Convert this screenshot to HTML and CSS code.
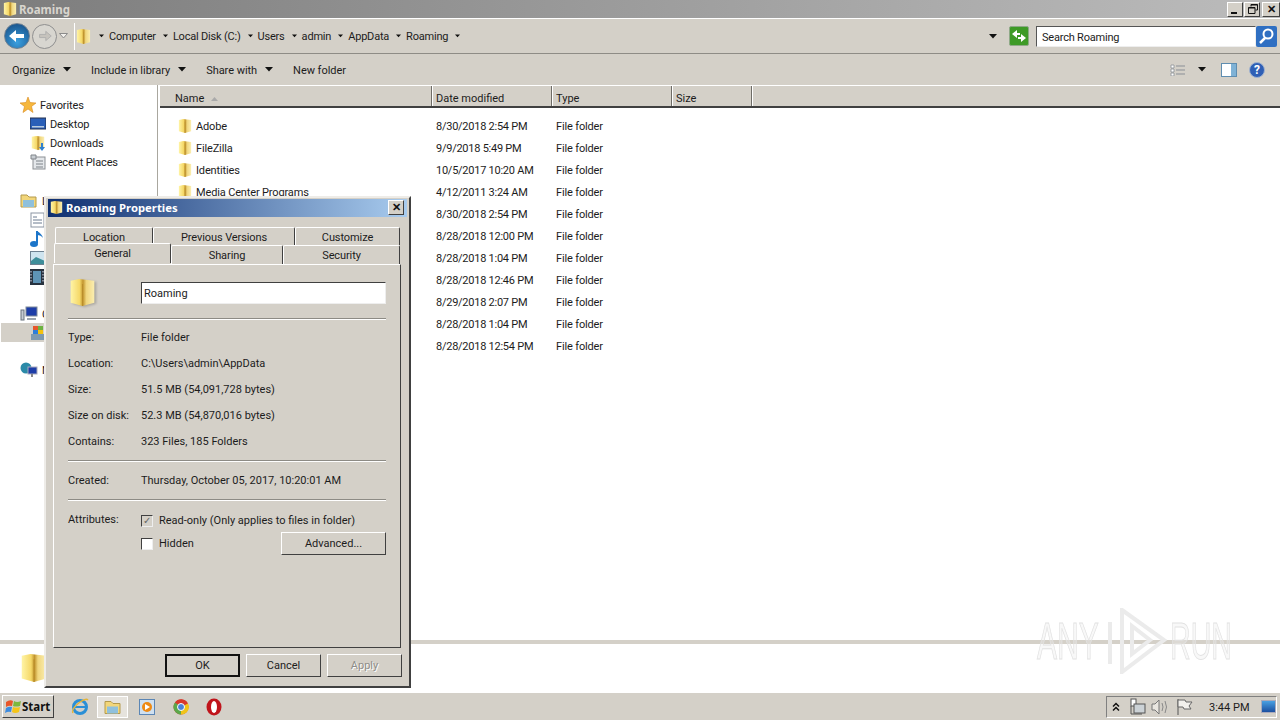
FILE: index.html
```html
<!doctype html>
<html>
<head>
<meta charset="utf-8">
<title>Roaming</title>
<link rel="stylesheet" href="styles.css">
</head>

<body>
<svg class="defs" width="0" height="0">
	<defs>
		<linearGradient id="fold" x1="0" y1="0" x2="1" y2="0">
			<stop offset="0" stop-color="#fff4a6"/>
			<stop offset=".38" stop-color="#f5d868"/>
			<stop offset=".52" stop-color="#c2952f"/>
			<stop offset=".66" stop-color="#f0d67e"/>
			<stop offset="1" stop-color="#fbeeb0"/>
		</linearGradient>
		<symbol id="folder" viewBox="0 0 16 18">
			<path d="M1 2 L6 1 L15 2 V15 L8 17 L1 15Z" fill="url(#fold)"/>
			<path d="M8 4 V17" stroke="#b98d2b" stroke-width=".6"/>
		</symbol>
		<symbol id="arrow" viewBox="0 0 8 5">
			<path d="M0 0H8L4 4.5Z" fill="#111"/>
		</symbol>
	</defs>
</svg>

<div class="window">
	<div class="titlebar">
		<svg class="title-icon"><use href="#folder"/></svg>
		<span class="title-text">Roaming</span>
		<div class="caption-btns">
			<div class="cap-btn"><span class="cap-min"></span></div>
			<div class="cap-btn">
				<svg class="cap-restore" width="10" height="10" viewBox="0 0 10 10"><path d="M3 2.500V.5H9.500V6H7.500M.5 3.500H7V9.500H.5Z M3 1H9.500 M.5 4H7" fill="none" stroke="#111"/></svg>
			</div>
			<div class="cap-btn cap-x">✕</div>
		</div>
	</div>

	<div class="addressbar">
		<div class="nav">
			<div class="nav-back">
				<svg width="18" height="14" viewBox="0 0 18 14"><path d="M1 7 L8 1 V5 H16 V9 H8 V13Z" fill="#fff"/></svg>
			</div>
			<div class="nav-fwd">
				<svg width="14" height="12" viewBox="0 0 18 14"><path d="M17 7 L10 1 V5 H2 V9 H10 V13Z" fill="#c6c3bd" stroke="#aaa"/></svg>
			</div>
			<svg class="nav-drop" width="9" height="6" viewBox="0 0 9 6"><path d="M.5 .5H8.5L4.5 5Z" fill="#f2f0ec" stroke="#8b8b8b"/></svg>
		</div>
		<div class="crumbs">
			<svg class="crumb-icon"><use href="#folder"/></svg>
			<svg class="crumb-arrow"><use href="#arrow"/></svg><span class="crumb">Computer</span>
			<svg class="crumb-arrow"><use href="#arrow"/></svg><span class="crumb">Local Disk (C:)</span>
			<svg class="crumb-arrow"><use href="#arrow"/></svg><span class="crumb">Users</span>
			<svg class="crumb-arrow"><use href="#arrow"/></svg><span class="crumb">admin</span>
			<svg class="crumb-arrow"><use href="#arrow"/></svg><span class="crumb">AppData</span>
			<svg class="crumb-arrow"><use href="#arrow"/></svg><span class="crumb">Roaming</span>
			<svg class="crumb-arrow"><use href="#arrow"/></svg>
			<svg class="crumb-end"><use href="#arrow"/></svg>
		</div>
		<div class="refresh">
			<svg width="16" height="14" viewBox="0 0 16 14"><path d="M1 5 L6 1 V4 H9 V6 H6 V9Z M15 9 L10 5 V8 H7 V10 H10 V13Z" fill="#fff"/></svg>
		</div>
		<div class="search">Search Roaming</div>
		<div class="search-btn">
			<svg width="18" height="18" viewBox="0 0 18 18"><circle cx="10" cy="7" r="4.5" fill="none" stroke="#fff" stroke-width="2"/><path d="M7 11 L2 16" stroke="#fff" stroke-width="2.5"/></svg>
		</div>
	</div>

	<div class="toolbar">
		<span class="tool">Organize</span><svg class="tool-arrow"><use href="#arrow"/></svg>
		<span class="tool">Include in library</span><svg class="tool-arrow"><use href="#arrow"/></svg>
		<span class="tool">Share with</span><svg class="tool-arrow"><use href="#arrow"/></svg>
		<span class="tool">New folder</span>
		<div class="tool-right">
			<svg width="16" height="12" viewBox="0 0 16 12"><path d="M1 1H4V4H1Z M1 5H4V8H1Z M1 9H4V12H1Z" fill="#fff" stroke="#8a8f96" stroke-width=".8"/><path d="M6 2H15M6 6H15M6 10H15" stroke="#8a8f96"/></svg>
			<svg class="view-arrow"><use href="#arrow"/></svg>
			<svg class="pane-icon" width="16" height="14" viewBox="0 0 16 14"><rect x=".5" y=".5" width="15" height="13" fill="#fff" stroke="#5f8db0"/><rect x="10" y="1" width="5" height="12" fill="#7fb2d6"/></svg>
			<svg class="help-icon" width="16" height="16" viewBox="0 0 16 16"><circle cx="8" cy="8" r="7.5" fill="#2f5fb5" stroke="#9fb2d0"/><text x="8" y="12" text-anchor="middle" class="help-q">?</text></svg>
		</div>
	</div>

	<div class="main">
		<div class="sidebar">
			<div class="nav-group">
				<div class="nav-head">
					<svg width="16" height="16" viewBox="0 0 16 16"><path d="M8 0 L10 5.5 L16 6 L11.5 9.5 L13 15.5 L8 12 L3 15.5 L4.500 9.500 L0 6 L6 5.500Z" fill="#f6b73c" stroke="#d98a1e" stroke-width=".6"/></svg>
					<span>Favorites</span>
				</div>
				<div class="nav-item">
					<svg width="16" height="14" viewBox="0 0 16 14"><rect width="16" height="11" y="1" fill="#2a5fb8" stroke="#23304f"/><rect x="2" y="9" width="12" height="1.500" fill="#bcd"/></svg>
					<span>Desktop</span>
				</div>
				<div class="nav-item">
					<svg width="16" height="16" viewBox="0 0 16 16"><use href="#folder"/><path d="M11 8V12H9L12 16L15 12H13V8Z" fill="#2f7fd0"/></svg>
					<span>Downloads</span>
				</div>
				<div class="nav-item">
					<svg width="16" height="16" viewBox="0 0 16 16"><rect x="3" y="3" width="12" height="12" fill="#e4e7ea" stroke="#8b8f94"/><path d="M1 1H6V5H1Z" fill="#c9ced3" stroke="#80858a"/><path d="M6 7H13M6 10H13M6 13H13" stroke="#7c8288"/></svg>
					<span>Recent Places</span>
				</div>
			</div>
			<div class="nav-group lib-group">
				<div class="nav-head">
					<svg width="18" height="15" viewBox="0 0 18 15"><path d="M1 2H7L9 4H16V14H1Z" fill="#f2d67a" stroke="#b49a4c"/><rect x="3" y="7" width="11" height="7" fill="#8fc0dc"/></svg>
					<span>L</span>
				</div>
				<div class="nav-item">
					<svg width="15" height="16" viewBox="0 0 15 16"><rect x="1" y="1" width="13" height="14" fill="#fff" stroke="#8b95a3"/><path d="M3 5H7M3 8H12M3 11H12" stroke="#6a7b90"/></svg>
				</div>
				<div class="nav-item">
					<svg width="14" height="18" viewBox="0 0 14 18"><path d="M7 1V13" stroke="#1c75c9" stroke-width="2"/><ellipse cx="4" cy="14" rx="4" ry="3" fill="#1c75c9"/><path d="M7 1 Q12 4 13 8 Q11 5 7 5Z" fill="#1c75c9"/></svg>
				</div>
				<div class="nav-item">
					<svg width="16" height="14" viewBox="0 0 16 14"><rect x=".5" y=".5" width="15" height="13" fill="#cfe4ef" stroke="#6e8191"/><path d="M1 10 L6 6 L15 10V13H1Z" fill="#3e8e9a"/></svg>
				</div>
				<div class="nav-item">
					<svg width="14" height="16" viewBox="0 0 14 16"><rect width="14" height="16" fill="#27323f"/><rect x="3" y="2" width="8" height="12" fill="#5e93b5"/><path d="M1 2V14M13 2V14" stroke="#dde" stroke-dasharray="1.500 1.500"/></svg>
				</div>
			</div>
			<div class="nav-group comp-group">
				<div class="nav-head">
					<svg width="18" height="15" viewBox="0 0 18 15"><rect x="6" y="1" width="11" height="9" fill="#1d3da8" stroke="#7f8a99"/><rect x="1" y="4" width="3" height="10" fill="#c5cbd3" stroke="#69727d"/><rect x="7" y="12" width="9" height="2" fill="#9aa4b0"/></svg>
					<span>C</span>
				</div>
				<div class="nav-item selected">
					<svg width="16" height="16" viewBox="0 0 16 16"><rect x="1" y="9" width="14" height="6" fill="#7e9aaf"/><rect x="3" y="1" width="5" height="4" fill="#e6572c"/><rect x="8" y="1" width="5" height="4" fill="#6cb33f"/><rect x="3" y="5" width="5" height="4" fill="#2f7ed8"/><rect x="8" y="5" width="5" height="4" fill="#f4c20d"/></svg>
				</div>
			</div>
			<div class="nav-group net-group">
				<div class="nav-head">
					<svg width="18" height="16" viewBox="0 0 18 16"><circle cx="6" cy="6" r="5.500" fill="#2b8aa8"/><rect x="8" y="5" width="9" height="7" fill="#1d3da8" stroke="#aab"/><path d="M12 12V15" stroke="#888" stroke-width="2"/></svg>
					<span>N</span>
				</div>
			</div>
		</div>

		<div class="files">
			<div class="file-head">
				<div class="col col-name">Name <svg class="sort" width="7" height="4" viewBox="0 0 7 4"><path d="M0 4L3.500 0L7 4Z" fill="#aaa"/></svg></div>
				<div class="col col-date">Date modified</div>
				<div class="col col-type">Type</div>
				<div class="col col-size">Size</div>
			</div>
			<div class="file-list">
				<div class="file"><svg class="file-icon"><use href="#folder"/></svg><span class="file-name">Adobe</span><span class="file-date">8/30/2018 2:54 PM</span><span class="file-type">File folder</span></div>
				<div class="file"><svg class="file-icon"><use href="#folder"/></svg><span class="file-name">FileZilla</span><span class="file-date">9/9/2018 5:49 PM</span><span class="file-type">File folder</span></div>
				<div class="file"><svg class="file-icon"><use href="#folder"/></svg><span class="file-name">Identities</span><span class="file-date">10/5/2017 10:20 AM</span><span class="file-type">File folder</span></div>
				<div class="file"><svg class="file-icon"><use href="#folder"/></svg><span class="file-name">Media Center Programs</span><span class="file-date">4/12/2011 3:24 AM</span><span class="file-type">File folder</span></div>
				<div class="file"><svg class="file-icon"><use href="#folder"/></svg><span class="file-name"></span><span class="file-date">8/30/2018 2:54 PM</span><span class="file-type">File folder</span></div>
				<div class="file"><svg class="file-icon"><use href="#folder"/></svg><span class="file-name"></span><span class="file-date">8/28/2018 12:00 PM</span><span class="file-type">File folder</span></div>
				<div class="file"><svg class="file-icon"><use href="#folder"/></svg><span class="file-name"></span><span class="file-date">8/28/2018 1:04 PM</span><span class="file-type">File folder</span></div>
				<div class="file"><svg class="file-icon"><use href="#folder"/></svg><span class="file-name"></span><span class="file-date">8/28/2018 12:46 PM</span><span class="file-type">File folder</span></div>
				<div class="file"><svg class="file-icon"><use href="#folder"/></svg><span class="file-name"></span><span class="file-date">8/29/2018 2:07 PM</span><span class="file-type">File folder</span></div>
				<div class="file"><svg class="file-icon"><use href="#folder"/></svg><span class="file-name"></span><span class="file-date">8/28/2018 1:04 PM</span><span class="file-type">File folder</span></div>
				<div class="file"><svg class="file-icon"><use href="#folder"/></svg><span class="file-name"></span><span class="file-date">8/28/2018 12:54 PM</span><span class="file-type">File folder</span></div>
			</div>
		</div>
	</div>

	<div class="details">
		<svg class="details-icon"><use href="#folder"/></svg>
	</div>

	<div class="taskbar">
		<div class="start">
			<svg width="17" height="16" viewBox="0 0 17 16"><path d="M1 3 Q5 0 8 2 L7 7 Q4 6 1 8Z" fill="#e8562a"/><path d="M9 2 Q12 4 16 2 L15 7 Q11 8 8 7Z" fill="#7cb83e"/><path d="M1 9 Q4 7 7 8 L6 13 Q3 12 0 14Z" fill="#3c8be0"/><path d="M8 8 Q11 9 15 8 L14 13 Q10 15 7 13Z" fill="#f5c518"/></svg>
			<span>Start</span>
		</div>
		<div class="quick">
			<svg class="q-ie" width="20" height="18" viewBox="0 0 20 18"><circle cx="10" cy="9" r="6.500" fill="none" stroke="#2a8fd6" stroke-width="3"/><path d="M4 9H16" stroke="#2a8fd6" stroke-width="2"/><path d="M3 15 Q1 11 10 4 Q16 0 18 2" fill="none" stroke="#e5b53a" stroke-width="1.500"/></svg>
			<div class="quick-active">
				<svg width="18" height="16" viewBox="0 0 18 15"><path d="M1 2H7L9 4H16V14H1Z" fill="#f2d67a" stroke="#b49a4c"/><rect x="3" y="7" width="11" height="7" fill="#8fc0dc"/></svg>
			</div>
			<svg class="q-wmp" width="16" height="16" viewBox="0 0 16 16"><rect x=".5" y=".5" width="15" height="15" fill="#cfe0f0" stroke="#5b86b5"/><circle cx="8" cy="8" r="5" fill="#ee8a14"/><path d="M6 5L11 8L6 11Z" fill="#fff"/></svg>
			<svg class="q-chrome" width="16" height="16" viewBox="0 0 16 16"><circle cx="8" cy="8" r="7.500" fill="#d8382c"/><path d="M8 8L15 4.500A7.500 7.500 0 0 0 2 3.500Z" fill="#d8382c"/><path d="M8 8L2 3.500A7.500 7.500 0 0 0 8 15.500Z" fill="#5ba84a"/><path d="M8 8L8 15.500A7.500 7.500 0 0 0 15 4.500Z" fill="#f0c419"/><circle cx="8" cy="8" r="3.500" fill="#4a82d8" stroke="#fff"/></svg>
			<svg class="q-opera" width="16" height="18" viewBox="0 0 16 18"><ellipse cx="8" cy="9" rx="7.500" ry="8.500" fill="#c0141b"/><ellipse cx="8" cy="9" rx="3" ry="6" fill="#fff"/></svg>
		</div>
		<div class="tray">
			<svg class="t-chev" width="8" height="10" viewBox="0 0 8 10"><path d="M1 4.500L4 1.500L7 4.500M1 8.500L4 5.500L7 8.500" fill="none" stroke="#111" stroke-width="1.500"/></svg>
			<svg class="t-net" width="18" height="18" viewBox="0 0 18 18"><rect x="3" y="1" width="5" height="7" fill="#fff" stroke="#555"/><rect x="6" y="6" width="11" height="9" fill="#ccd2d6" stroke="#555"/><path d="M3 8V16H14" fill="none" stroke="#555"/></svg>
			<svg class="t-sound" width="18" height="16" viewBox="0 0 18 16"><path d="M1 5H4L8 1V15L4 11H1Z" fill="#e9e6e0" stroke="#777"/><path d="M11 4Q13 8 11 12M14 2Q17 8 14 14" fill="none" stroke="#888"/></svg>
			<svg class="t-flag" width="17" height="18" viewBox="0 0 17 18"><path d="M2 1V17" stroke="#555"/><path d="M2 2H9L10 4H16L13 8L15 11H8L7 9H2Z" fill="#f2f0ec" stroke="#666"/></svg>
			<span class="clock">3:44 PM</span>
			<div class="show-desktop"></div>
		</div>
	</div>
</div>

<div class="dialog">
	<div class="dlg-title">
		<svg class="dlg-title-icon"><use href="#folder"/></svg>
		<span>Roaming Properties</span>
		<div class="cap-btn dlg-close">✕</div>
	</div>
	<div class="tabs">
		<div class="tab-row tab-row-back">
			<div class="tab tab-location">Location</div>
			<div class="tab tab-prev">Previous Versions</div>
			<div class="tab tab-custom">Customize</div>
		</div>
		<div class="tab-row tab-row-front">
			<div class="tab tab-general">General</div>
			<div class="tab tab-sharing">Sharing</div>
			<div class="tab tab-security">Security</div>
		</div>
	</div>
	<div class="panel">
		<div class="name-row">
			<svg class="big-folder"><use href="#folder"/></svg>
			<div class="name-input">Roaming</div>
		</div>
		<div class="sep sep-first"></div>
		<div class="prop"><span class="prop-label">Type:</span><span>File folder</span></div>
		<div class="prop"><span class="prop-label">Location:</span><span>C:\Users\admin\AppData</span></div>
		<div class="prop"><span class="prop-label">Size:</span><span>51.5 MB (54,091,728 bytes)</span></div>
		<div class="prop"><span class="prop-label">Size on disk:</span><span>52.3 MB (54,870,016 bytes)</span></div>
		<div class="prop"><span class="prop-label">Contains:</span><span>323 Files, 185 Folders</span></div>
		<div class="sep sep-mid"></div>
		<div class="prop"><span class="prop-label">Created:</span><span>Thursday, October 05, 2017, 10:20:01 AM</span></div>
		<div class="sep sep-created"></div>
		<div class="attrs">
			<span class="prop-label attr-label">Attributes:</span>
			<div class="attr-list">
				<div class="attr"><span class="check checked">✓</span><span>Read-only (Only applies to files in folder)</span></div>
				<div class="attr attr-hidden"><span class="check"></span><span>Hidden</span><div class="btn btn-advanced">Advanced...</div></div>
			</div>
		</div>
	</div>
	<div class="dlg-buttons">
		<div class="btn btn-ok">OK</div>
		<div class="btn">Cancel</div>
		<div class="btn btn-disabled">Apply</div>
	</div>
</div>

<div class="watermark">
	<span class="wm-any">ANY</span>
	<svg width="66" height="66" viewBox="0 0 66 66"><path d="M20 2L62 32L20 64Z M30 18L48 32L30 46Z M8 14V56" fill="none" stroke="#ebebeb" stroke-width="4"/></svg>
	<span class="wm-run">RUN</span>
</div>
</body>
</html>
```

FILE: styles.css
```css
* { margin: 0; padding: 0; box-sizing: border-box; }
html, body { width: 1280px; height: 720px; overflow: hidden; }
body {
	font-family: Roboto, "Liberation Sans", sans-serif;
	font-size: 11px;
	color: #1c1c1c;
	background: #fff;
}
svg { display: block; flex: none; }
.defs { position: absolute; }

.window { width: 1280px; height: 720px; display: flex; flex-direction: column; }

/* title bar */
.titlebar {
	height: 18px;
	display: flex;
	align-items: center;
	padding-left: 3px;
	background: linear-gradient(to right, #7d7d7d, #bcbcbc);
	color: #d8d5ce;
	font-family: "Noto Sans", sans-serif;
	font-weight: bold;
}
.title-icon { width: 14px; height: 16px; margin-right: 2px; }
.title-text { font-size: 11.5px; }
.caption-btns { margin-left: auto; display: flex; gap: 1px; }
.cap-btn {
	width: 16px;
	height: 15px;
	background: #d4d0c8;
	border: 1px solid;
	border-color: #fff #404040 #404040 #fff;
	color: #111;
	font-size: 11px;
	line-height: 12px;
	text-align: center;
	font-weight: bold;
	position: relative;
}
.cap-x { width: 18px; margin-left: 1px; }
.cap-min { position: absolute; left: 3px; bottom: 2px; width: 6px; height: 2px; background: #111; }
.cap-restore { position: absolute; left: 3px; top: 1px; }

/* address bar */
.addressbar {
	height: 36px;
	display: flex;
	align-items: center;
	padding-left: 4px;
	background: #d4d0c8;
	border-top: 1px solid #fff;
	border-bottom: 1px solid #8e8c86;
}
.nav { display: flex; align-items: center; width: 70px; }
.nav-back {
	width: 26px;
	height: 26px;
	border-radius: 50%;
	background: radial-gradient(circle at 50% 75%, #3aa0e0, #14487f);
	border: 1px solid #6d7f90;
	display: flex;
	align-items: center;
	justify-content: center;
}
.nav-fwd {
	width: 25px;
	height: 25px;
	border-radius: 50%;
	background: #d8d6d0;
	border: 1px solid #8f8f8f;
	display: flex;
	align-items: center;
	justify-content: center;
	margin-left: 2px;
}
.nav-drop { margin-left: 2px; }
.crumbs {
	width: 924px;
	height: 27px;
	display: flex;
	align-items: center;
	background: #d4d0c8;
	border-left: 1px solid #fff;
}
.crumb-icon { width: 15px; height: 19px; margin-left: 1px; margin-right: 4px; }
.crumb-arrow { width: 5px; height: 4px; margin: 0 5px 0 7px; }
.crumb-icon + .crumb-arrow { margin-left: 4px; }
.crumb { letter-spacing: -.2px; }
.crumb-end { width: 8px; height: 5px; margin-left: auto; margin-right: 1px; }
.refresh {
	width: 20px;
	height: 20px;
	margin-left: 11px;
	border-radius: 2px;
	background: #3e9a26;
	border: 1px solid #8ea987;
	display: flex;
	align-items: center;
	justify-content: center;
}
.search {
	width: 220px;
	height: 21px;
	margin-left: 7px;
	background: #fff;
	border: 1px solid;
	border-color: #555 #eee #eee #555;
	padding-left: 5px;
	line-height: 21px;
	letter-spacing: -.2px;
}
.search-btn {
	width: 21px;
	height: 21px;
	border-radius: 2px;
	background: #2f6fc2;
	display: flex;
	align-items: center;
	justify-content: center;
}

/* toolbar */
.toolbar {
	height: 31px;
	display: flex;
	align-items: center;
	padding-left: 12px;
	background: #d4d0c8;
}
.tool { padding-top: 2px; letter-spacing: -.04px; }
.tool-arrow { width: 8px; height: 5px; margin: 0 20px 0 8px; }
.tool-right { margin-left: auto; display: flex; align-items: center; padding-right: 15px; }
.view-arrow { width: 8px; height: 5px; margin: 0 15px 0 12px; }
.pane-icon { margin-right: 12px; }
.help-q { font-size: 12px; font-weight: bold; fill: #fff; }

/* main area */
.main { height: 555px; display: flex; background: #fff; }
.sidebar { width: 158px; padding-top: 10px; border-right: 1px solid #a9a79f; margin-right: 2px; }
.nav-group { margin-bottom: 20px; }
.nav-head { height: 19px; display: flex; align-items: center; gap: 4px; padding-left: 20px; }
.nav-item { height: 19px; display: flex; align-items: center; gap: 4px; padding-left: 30px; }
.nav-head span, .nav-item span { padding-top: 2px; letter-spacing: -.12px; }
.nav-item.selected { background: #d4d0c8; margin-left: 1px; padding-left: 29px; height: 19px; }
.lib-group { margin-bottom: 18px; }
.comp-group { margin-bottom: 18px; }

.files { flex: 1; }
.file-head { height: 23px; display: flex; background: #d4d0c8; border-top: 1px solid #fff; border-bottom: 2px solid #404040; }
.col { line-height: 25px; border-right: 1px solid #6e6c66; padding-left: 4px; box-shadow: 1px 0 0 #fff; }
.col-name { width: 272px; padding: 5px 0 0 15px; display: flex; align-items: center; gap: 7px; }
.col-date { width: 120px; }
.col-type { width: 120px; }
.col-size { width: 80px; }
.file-list { padding-top: 7px; }
.file { height: 22px; display: flex; align-items: center; }
.file-icon { width: 14px; height: 16px; margin-left: 18px; margin-right: 4px; }
.file-name { width: 240px; letter-spacing: -.15px; }
.file-date { width: 120px; letter-spacing: -.25px; }
.file-type { letter-spacing: -.15px; }

/* details pane */
.details { height: 52px; background: #fff; border-top: 4px solid #d4d0c8; overflow: hidden; padding-left: 20px; padding-top: 2px; }
.details-icon { width: 28px; height: 44px; }

/* taskbar */
.taskbar {
	height: 28px;
	display: flex;
	align-items: center;
	background: #d4d0c8;
	border-top: 1px solid #fff;
	padding-left: 2px;
}
.start {
	width: 52px;
	height: 23px;
	display: flex;
	align-items: center;
	padding-left: 2px;
	border: 1px solid;
	border-color: #fff #404040 #404040 #fff;
	font-family: "Noto Sans", sans-serif;
	font-weight: bold;
	font-size: 11.5px;
	color: #111;
}
.quick { display: flex; align-items: center; margin-left: 16px; }
.quick-active {
	width: 31px;
	height: 22px;
	margin: 0 11px 0 7px;
	border: 1px solid #fff;
	background: #e6e3dd;
	display: flex;
	align-items: center;
	justify-content: center;
}
.q-chrome { margin-left: 18px; }
.q-opera { margin-left: 17px; }
.tray {
	margin-left: auto;
	width: 171px;
	height: 22px;
	display: flex;
	align-items: center;
	border: 1px solid;
	border-color: #808080 #fff #fff #808080;
	margin-right: 3px;
}
.t-chev { margin-left: 5px; }
.t-net { margin-left: 8px; }
.t-sound { margin-left: 5px; }
.t-flag { margin-left: 7px; }
.clock { margin-left: 16px; white-space: nowrap; width: 40px; padding-top: 1px; }
.show-desktop {
	width: 16px;
	height: 13px;
	background: linear-gradient(#4aa0e2, #1c4fa0);
	border: 1px solid #aab;
	margin-left: 12px;
}

/* properties dialog, a window over the explorer */
.dialog {
	position: absolute;
	left: 44px;
	top: 196px;
	width: 367px;
	height: 492px;
	display: flex;
	flex-direction: column;
	background: #d4d0c8;
	border: 2px solid;
	border-color: #eeece8 #404040 #404040 #eeece8;
	padding: 1px 2px;
}
.dlg-title {
	height: 18px;
	display: flex;
	align-items: center;
	padding: 0 0 1px 2px;
	gap: 3px;
	color: #fff;
	font-family: "Noto Sans", sans-serif;
	font-size: 11.300px;
	font-weight: bold;
	background: linear-gradient(to right, #0f2f70, #a8cbee);
}
.dlg-title-icon { width: 13px; height: 15px; }
.dlg-close { margin-left: auto; margin-right: 3px; }

.tabs { margin: 10px 0 0 6px; width: 348px; }
.tab-row { display: flex; height: 18px; }
.tab {
	text-align: center;
	line-height: 20px;
	letter-spacing: -.1px;
	border: 1px solid;
	border-color: #fff #404040 transparent #fff;
	border-bottom: 0;
	border-radius: 2px 2px 0 0;
}
.tab-row-back { padding-left: 1px; }
.tab-row-front { height: 19px; }
.tab-location { width: 98px; }
.tab-prev { width: 142px; }
.tab-custom { width: 105px; }
.tab-general { width: 117px; height: 20px; margin-top: -2px; line-height: 19px; position: relative; background: #d4d0c8; z-index: 1; }
.tab-sharing { width: 112px; }
.tab-security { width: 117px; }

.panel {
	margin-left: 5px;
	width: 348px;
	height: 384px;
	padding: 0 14px;
	border: 1px solid;
	border-color: #fff #404040 #404040 #fff;
}
.name-row { display: flex; align-items: center; height: 53px; padding-top: 2px; }
.big-folder { width: 27px; height: 35px; margin-left: 1px; margin-right: 45px; filter: drop-shadow(2px 1px 1px rgba(0,0,0,.2)); }
.name-input {
	width: 245px;
	height: 22px;
	background: #fff;
	border: 1px solid;
	border-color: #404040 #eee #eee #404040;
	padding-left: 2px;
	line-height: 22px;
}
.sep { height: 2px; background: #8d8b85; border-bottom: 1px solid #fff; }
.sep-first { margin-bottom: 4px; }
.sep-mid { margin-top: 6px; margin-bottom: 5px; }
.sep-created { margin-top: 6px; margin-bottom: 5px; }
.prop { display: flex; height: 26px; align-items: center; }
.prop-label { width: 73px; flex: none; }
.attr-label { padding-top: 1px; }
.attrs { display: flex; padding-top: 6px; }
.attr-list { flex: 1; margin-top: -3px; }
.attr { display: flex; align-items: center; gap: 6px; height: 23px; }
.attr-hidden { position: relative; }
.check {
	width: 12px;
	height: 12px;
	background: #fff;
	border: 1px solid;
	border-color: #404040 #eee #eee #404040;
	font-size: 10px;
	line-height: 10px;
	text-align: center;
	color: #666;
}
.check.checked { background: #d4d0c8; }
.btn {
	width: 75px;
	height: 23px;
	text-align: center;
	line-height: 21px;
	border: 1px solid;
	border-color: #fff #404040 #404040 #fff;
}
.btn-advanced { width: 105px; margin-left: auto; }
.dlg-buttons { display: flex; justify-content: flex-end; gap: 6px; padding: 6px 5px 0 0; }
.btn-ok { border: 2px solid #111; line-height: 19px; }
.btn-disabled { color: #8f8d88; text-shadow: 1px 1px 0 #fff; }

/* watermark */
.watermark {
	position: absolute;
	left: 1037px;
	top: 608px;
	height: 66px;
	display: flex;
	align-items: center;
	font-family: "Liberation Sans", sans-serif;
	font-size: 51px;
	line-height: 1;
	color: rgba(235,235,235,.35);
	-webkit-text-stroke: 1px #e2e2e2;
}
.wm-any { width: 65px; white-space: nowrap; transform: scaleX(.59); transform-origin: left; }
.wm-run { width: 62px; margin-left: 2px; white-space: nowrap; transform: scaleX(.56); transform-origin: left; }
```
